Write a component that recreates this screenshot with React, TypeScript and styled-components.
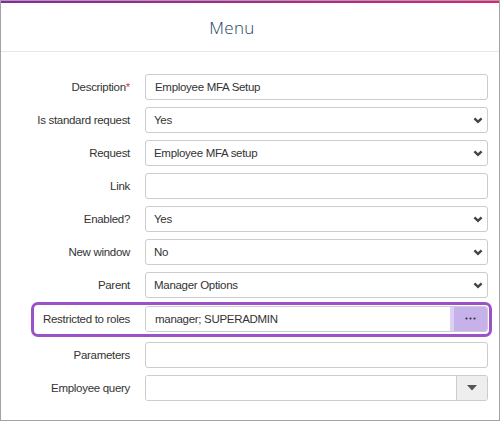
import React from 'react'
import styled, { createGlobalStyle } from 'styled-components'

const GlobalStyle = createGlobalStyle`
    html, body {
        margin: 0;
        padding: 0;
        background: #ffffff;
    }
    * {
        box-sizing: border-box;
    }
`

interface FieldDef {
    label: string
    kind: 'text' | 'select' | 'picker' | 'combo'
    value?: string
    required?: boolean
    highlight?: boolean
}

const fields: FieldDef[] = [
    { label: 'Description', kind: 'text', value: 'Employee MFA Setup', required: true },
    { label: 'Is standard request', kind: 'select', value: 'Yes' },
    { label: 'Request', kind: 'select', value: 'Employee MFA setup' },
    { label: 'Link', kind: 'text', value: '' },
    { label: 'Enabled?', kind: 'select', value: 'Yes' },
    { label: 'New window', kind: 'select', value: 'No' },
    { label: 'Parent', kind: 'select', value: 'Manager Options' },
    { label: 'Restricted to roles', kind: 'picker', value: 'manager; SUPERADMIN', highlight: true },
    { label: 'Parameters', kind: 'text', value: '' },
    { label: 'Employee query', kind: 'combo', value: '' },
]

const Chevron = () => (
    <svg width='10' height='7' viewBox='0 0 10 7'>
        <path d='M1.4 1.4 L5 4.8 L8.6 1.4' fill='none' stroke='#444' strokeWidth='2.4' />
    </svg>
)

const Field = ({ f }: { f: FieldDef }) => {
    if (f.kind === 'select') {
        return (
            <SelectWrap>
                <Select defaultValue={f.value}>
                    <option>{f.value}</option>
                </Select>
                <ChevronSlot>
                    <Chevron />
                </ChevronSlot>
            </SelectWrap>
        )
    }
    if (f.kind === 'picker') {
        return (
            <Group>
                <GroupInput defaultValue={f.value} />
                <PickerButton>
                    <svg width='11' height='3' viewBox='0 0 11 3'>
                        <circle cx='1.5' cy='1.5' r='1.1' fill='#333' />
                        <circle cx='5.5' cy='1.5' r='1.1' fill='#333' />
                        <circle cx='9.5' cy='1.5' r='1.1' fill='#333' />
                    </svg>
                </PickerButton>
            </Group>
        )
    }
    if (f.kind === 'combo') {
        return (
            <Group>
                <GroupInput defaultValue='' />
                <ComboButton>
                    <svg width='10' height='6' viewBox='0 0 10 6'>
                        <path d='M0 0 L10 0 L5 5.5 Z' fill='#555' />
                    </svg>
                </ComboButton>
            </Group>
        )
    }
    return <Input defaultValue={f.value} />
}

const App = () => {
    return (
        <>
            <GlobalStyle />
            <Card>
                <TopBar />
                <Header>
                    <Title>Menu</Title>
                </Header>
                <Form>
                    {fields.map((f) => (
                        <Row key={f.label} highlight={f.highlight}>
                            <Label>
                                {f.label}
                                {f.required && <Star>*</Star>}
                            </Label>
                            <Field f={f} />
                        </Row>
                    ))}
                </Form>
            </Card>
        </>
    )
}

const Card = styled.div`
    width: 500px;
    height: 421px;
    border: 1px solid #a3a3a3;
    background: #fff;
    display: flex;
    flex-direction: column;
    font-family: 'Liberation Sans', Arial, sans-serif;
`

const TopBar = styled.div`
    height: 2px;
    background: linear-gradient(90deg, #8e24aa 0%, #b0248f 50%, #e0207a 100%);
`

const Header = styled.div`
    height: 49px;
    border-bottom: 1px solid #e6e6e6;
    display: flex;
    align-items: center;
    justify-content: center;
`

const Title = styled.h1`
    margin: 0;
    font-family: 'Open Sans', sans-serif;
    font-weight: 300;
    font-size: 17px;
    color: #263f5c;
    letter-spacing: 0.3px;
    transform: translateX(-18px);
`

const Form = styled.div`
    padding-top: 22px;
    display: flex;
    flex-direction: column;
    gap: 7px;
`

const Row = styled.div<{ highlight?: boolean }>`
    position: relative;
    display: grid;
    grid-template-columns: 129px 1fr;
    column-gap: 15px;
    align-items: center;
    padding-right: 11px;
    margin-top: ${(p) => (p.highlight ? '1px' : '0')};
    margin-bottom: ${(p) => (p.highlight ? '3px' : '0')};

    &::before {
        content: '';
        display: ${(p) => (p.highlight ? 'block' : 'none')};
        position: absolute;
        left: 30px;
        right: 7px;
        top: -4px;
        bottom: -5px;
        border: 3px solid #9b52c9;
        border-radius: 7px;
        pointer-events: none;
    }
`

const Label = styled.label`
    text-align: right;
    font-size: 11.5px;
    letter-spacing: -0.3px;
    color: #333;
    white-space: nowrap;
`

const Star = styled.span`
    color: #d9413c;
`

const Input = styled.input`
    height: 26px;
    width: 100%;
    border: 1px solid #cccccc;
    border-radius: 3px;
    padding: 0 9px;
    font-family: 'Liberation Sans', Arial, sans-serif;
    font-size: 11.5px;
    letter-spacing: -0.3px;
    color: #333;
    outline: none;
    background: #fff;
`

const SelectWrap = styled.div`
    position: relative;
    height: 26px;
`

const Select = styled.select`
    appearance: none;
    height: 26px;
    width: 100%;
    border: 1px solid #cccccc;
    border-radius: 3px;
    padding: 0 8px;
    font-family: 'Liberation Sans', Arial, sans-serif;
    font-size: 11.5px;
    letter-spacing: -0.3px;
    color: #333;
    background: #fff;
    outline: none;
`

const ChevronSlot = styled.span`
    position: absolute;
    right: 5px;
    top: 10px;
    display: flex;
    pointer-events: none;
`

const Group = styled.div`
    display: flex;
    height: 26px;
    border: 1px solid #cccccc;
    border-radius: 3px;
    overflow: hidden;
`

const GroupInput = styled.input`
    flex: 1;
    min-width: 0;
    border: none;
    padding: 0 9px;
    font-family: 'Liberation Sans', Arial, sans-serif;
    font-size: 11.5px;
    letter-spacing: -0.3px;
    color: #333;
    outline: none;
    background: #fff;
`

const PickerButton = styled.button`
    width: 37px;
    border: none;
    border-left: 4px solid #ddd0f5;
    background: #c6b1ea;
    display: flex;
    align-items: center;
    justify-content: center;
    padding: 0;
    padding-bottom: 2px;
`

const ComboButton = styled.button`
    width: 31px;
    border: none;
    border-left: 1px solid #cccccc;
    background: #eeeeee;
    display: flex;
    align-items: center;
    justify-content: center;
    padding: 0;
`

export default App
